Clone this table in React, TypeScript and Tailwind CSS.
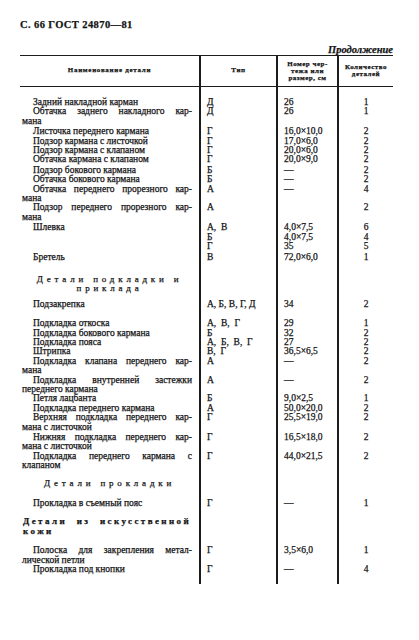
type Row = {
  name: string[];
  wrap?: boolean;
  kind?: "item" | "section" | "sectionLeft";
  type?: string;
  size?: string;
  qty?: string;
  pt?: string;
};

// Table body rows (name lines, type, drawing / size, quantity)
const rows: Row[] = [
  { name: ["Задний накладной карман"], type: "Д", size: "26", qty: "1", pt: "pt-[11px]" },
  { name: ["Обтачка заднего накладного кар-", "мана"], wrap: true, type: "Д", size: "26", qty: "1" },
  { name: ["Листочка переднего кармана"], type: "Г", size: "16,0×10,0", qty: "2", pt: "pt-[1px]" },
  { name: ["Подзор кармана с листочкой"], type: "Г", size: "17,0×6,0", qty: "2" },
  { name: ["Подзор кармана с клапаном"], type: "Г", size: "20,0×6,0", qty: "2" },
  { name: ["Обтачка кармана с клапаном"], type: "Г", size: "20,0×9,0", qty: "2" },
  { name: ["Подзор бокового кармана"], type: "Б", size: "—", qty: "2", pt: "pt-[1px]" },
  { name: ["Обтачка бокового кармана"], type: "Б", size: "—", qty: "2" },
  { name: ["Обтачка переднего прорезного кар-", "мана"], wrap: true, type: "А", size: "—", qty: "4" },
  { name: ["Подзор переднего прорезного кар-", "мана"], wrap: true, type: "А", size: "", qty: "2" },
  { name: ["Шлевка"], type: "А,  В", size: "4,0×7,5", qty: "6", pt: "pt-[1px]" },
  { name: [""], type: "Б", size: "4,0×7,5", qty: "4" },
  { name: [""], type: "Г", size: "35", qty: "5" },
  { name: ["Бретель"], type: "В", size: "72,0×6,0", qty: "1", pt: "pt-[1px]" },
  { name: ["Детали подкладки и", "приклада"], kind: "section", pt: "pt-[13px]" },
  { name: ["Подзакрепка"], type: "А, Б, В, Г, Д", size: "34", qty: "2", pt: "pt-[6px]" },
  { name: ["Подкладка откоска"], type: "А,  В,  Г", size: "29", qty: "1", pt: "pt-[10px]" },
  { name: ["Подкладка бокового кармана"], type: "Б", size: "32", qty: "2" },
  { name: ["Подкладка пояса"], type: "А,  Б,  В,  Г", size: "27", qty: "2" },
  { name: ["Штрипка"], type: "В,  Г", size: "36,5×6,5", qty: "2" },
  { name: ["Подкладка клапана переднего кар-", "мана"], wrap: true, type: "А", size: "—", qty: "2" },
  { name: ["Подкладка внутренней застежки", "переднего кармана"], wrap: true, type: "А", size: "—", qty: "2" },
  { name: ["Петля лацбанта"], type: "Б", size: "9,0×2,5", qty: "1" },
  { name: ["Подкладка переднего кармана"], type: "А", size: "50,0×20,0", qty: "2" },
  { name: ["Верхняя подкладка переднего кар-", "мана с листочкой"], wrap: true, type: "Г", size: "25,5×19,0", qty: "2" },
  { name: ["Нижняя подкладка переднего кар-", "мана с листочкой"], wrap: true, type: "Г", size: "16,5×18,0", qty: "2", pt: "pt-[1px]" },
  { name: ["Подкладка переднего кармана с", "клапаном"], wrap: true, type: "Г", size: "44,0×21,5", qty: "2" },
  { name: ["Детали прокладки"], kind: "section", pt: "pt-[8px]" },
  { name: ["Прокладка в съемный пояс"], type: "Г", size: "—", qty: "1", pt: "pt-[11px]" },
  { name: ["Детали из искусственной", "кожи"], kind: "sectionLeft", pt: "pt-[9px]" },
  { name: ["Полоска для закрепления метал-", "лической петли"], wrap: true, type: "Г", size: "3,5×6,0", qty: "1", pt: "pt-[10px]" },
  { name: ["Прокладка под кнопки"], type: "Г", size: "—", qty: "4" },
];

const NameCell = ({ row }: { row: Row }) => {
  if (row.kind === "section") {
    return (
      <div className={`${row.pt ?? ""} text-center tracking-[3.8px] text-[9px]`}>
        {row.name.map((line, i) => (
          <div key={i}>{line}</div>
        ))}
      </div>
    );
  }
  if (row.kind === "sectionLeft") {
    return (
      <div className={`${row.pt ?? ""} pl-[3px] pr-[8px] font-bold tracking-[2.4px] text-[9px]`}>
        <div className="text-justify [text-align-last:justify]">{row.name[0]}</div>
        <div>{row.name[1]}</div>
      </div>
    );
  }
  return (
    <div className={`${row.pt ?? ""} pl-[2px] pr-[7px]`}>
      {row.name.map((line, i) => (
        <div
          key={i}
          className={
            i === 0
              ? row.wrap
                ? "pl-[11px] text-justify [text-align-last:justify] whitespace-nowrap"
                : "pl-[11px] whitespace-nowrap"
              : "whitespace-nowrap"
          }
        >
          {line || "\u00a0"}
        </div>
      ))}
    </div>
  );
};

export default function App() {
  return (
    <div className="w-[419px] h-[640px] bg-white text-[#141414] font-['Liberation_Serif',serif] [-webkit-text-stroke:0.25px_#141414] pt-[19px] pl-[20px]">
      {/* Page heading */}
      <div className="text-[10.5px] leading-[12px] font-bold tracking-[0.4px]">С. 66 ГОСТ 24870—81</div>
      <div className="w-[373px] mt-[14px] text-right text-[10.5px] leading-[10px] italic font-bold">
        Продолжение
      </div>

      {/* Table */}
      <div className="w-[373px] grid grid-cols-[179px_77px_61px_56px] text-[9.5px] leading-[9.4px]">
        {/* Header */}
        <div className="h-[32px] border-y-[1.5px] border-[#1c1c1c] flex items-center justify-center text-[7px] font-bold tracking-[0.7px]">
          Наименование детали
        </div>
        <div className="h-[32px] border-y-[1.5px] border-l-[2px] border-[#1c1c1c] flex items-center justify-center text-[7px] font-bold tracking-[0.6px]">
          Тип
        </div>
        <div className="h-[32px] border-y-[1.5px] border-l-[2px] border-[#1c1c1c] flex flex-col items-center justify-center text-[7px] leading-[7px] font-bold tracking-[0.5px]">
          <span>Номер чер-</span>
          <span>тежа или</span>
          <span>размер, см</span>
        </div>
        <div className="h-[32px] border-y-[1.5px] border-l-[2px] border-[#1c1c1c] flex flex-col items-center justify-center text-[7px] leading-[7px] font-bold tracking-[0.5px]">
          <span>Количество</span>
          <span>деталей</span>
        </div>

        {/* Body */}
        {rows.map((row, idx) => (
          <div key={idx} className="contents">
            <NameCell row={row} />
            <div className={`${row.pt ?? ""} border-l-[2px] border-[#1c1c1c] pl-[6px] whitespace-pre`}>{row.type}</div>
            <div className={`${row.pt ?? ""} border-l-[2px] border-[#1c1c1c] pl-[6px]`}>{row.size}</div>
            <div className={`${row.pt ?? ""} border-l-[2px] border-[#1c1c1c] text-center`}>{row.qty}</div>
          </div>
        ))}
        <div className="h-[10px]" />
        <div className="h-[10px] border-l-[2px] border-[#1c1c1c]" />
        <div className="h-[10px] border-l-[2px] border-[#1c1c1c]" />
        <div className="h-[10px] border-l-[2px] border-[#1c1c1c]" />
      </div>
    </div>
  );
}
